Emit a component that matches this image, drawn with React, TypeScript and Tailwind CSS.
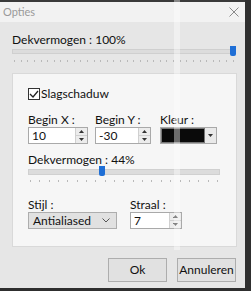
import React from "react";

const font = { fontFamily: 'Lato, "Noto Sans", sans-serif' };

const Ticks = ({ count }: { count: number }) => (
  <div className="flex justify-between px-[2px] h-[3px]">
    {Array.from({ length: count }).map((_, i) => (
      <span key={i} className="w-px h-[2px] bg-[#b9b9b9]" />
    ))}
  </div>
);

const Spinner = () => (
  <div className="flex flex-col w-[12px] h-full border-l border-[#d0d0d0] bg-[#ececec]">
    <div className="flex-1 flex items-center justify-center border-b border-[#d0d0d0]">
      <svg width="5" height="3" viewBox="0 0 5 3"><path d="M0 3 L2.5 0 L5 3 Z" fill="#333" /></svg>
    </div>
    <div className="flex-1 flex items-center justify-center">
      <svg width="5" height="3" viewBox="0 0 5 3"><path d="M0 0 L2.5 3 L5 0 Z" fill="#333" /></svg>
    </div>
  </div>
);

const NumberBox = ({ value, width }: { value: string; width: string }) => (
  <div className={`flex h-[17px] ${width} border border-[#a9a9a9] bg-white`}>
    <div className="flex-1 pl-[3px] text-[12px] leading-[15px] text-[#111]">{value}</div>
    <Spinner />
  </div>
);

const App = () => {
  return (
    <div style={font} className="relative w-[251px] h-[291px] overflow-hidden bg-[#2b2b2b] flex">
      <div className="w-[245px] h-full flex flex-col">
        <div className="h-[2px] bg-[#3a3a3a]" />
        {/* title bar */}
        <div className="h-[20px] bg-[#f2f2f2] flex items-center justify-between pl-[3px] pr-[6px]">
          <span className="text-[11px] text-[#9a9a9a]">Opties</span>
          <svg width="10" height="10" viewBox="0 0 10 10">
            <path d="M0.5 0.5 L9.5 9.5 M9.5 0.5 L0.5 9.5" stroke="#8a8a8a" strokeWidth="1" />
          </svg>
        </div>
        <div className="flex-1 bg-[#e6e6e6] flex flex-col px-[12px] pt-[11px] text-[#111]">
          <div className="text-[12px] leading-[13px] w-[224px]">Dekvermogen : 100%</div>
          {/* slider 1 */}
          <div className="relative h-[11px] w-[224px] flex items-center">
            <div className="w-full h-[5px] bg-[#dcdcdc] border border-[#cfcfcf]" />
            <div className="absolute right-0 top-0 w-[6px] h-[10px] bg-[#1f6fd6] rounded-b-[2px]" />
          </div>
          <div className="mt-[3px] w-[224px]">
            <Ticks count={34} />
          </div>
          {/* panel */}
          <div className="mt-[10px] w-[225px] h-[174px] bg-[#f6f6f6] border border-[#d9d9d9] px-[15px] pt-[13px]">
            <div className="flex items-center gap-[1px] h-[14px]">
              <div className="w-[12px] h-[12px] border border-[#333] bg-white flex items-center justify-center">
                <svg width="10" height="8" viewBox="0 0 10 8">
                  <path d="M1 4 L4 7 L9 1" stroke="#222" strokeWidth="1.3" fill="none" />
                </svg>
              </div>
              <span className="text-[12px]">Slagschaduw</span>
            </div>
            <div className="flex mt-[12px]">
              <div className="w-[67px]">
                <div className="text-[12px] leading-[14px]">Begin X :</div>
                <NumberBox value="10" width="w-[60px]" />
              </div>
              <div className="w-[65px]">
                <div className="text-[12px] leading-[14px]">Begin Y :</div>
                <NumberBox value="-30" width="w-[56px]" />
              </div>
              <div>
                <div className="text-[12px] leading-[14px]">Kleur :</div>
                <div className="flex h-[17px] w-[57px] border border-[#a9a9a9] bg-[#e9e9e9]">
                  <div className="w-[44px] h-full bg-[#0a0a0a] border border-[#777]" />
                  <div className="flex-1 flex items-center justify-center">
                    <svg width="5" height="3" viewBox="0 0 5 3"><path d="M0 0 L2.5 3 L5 0 Z" fill="#333" /></svg>
                  </div>
                </div>
              </div>
            </div>
            <div className="mt-[9px] text-[12px] leading-[13px]">Dekvermogen : 44%</div>
            {/* slider 2 */}
            <div className="relative h-[11px] w-[192px] flex items-center">
              <div className="w-full h-[6px] bg-[#dcdcdc] border border-[#d0d0d0]" />
              <div className="absolute left-[71px] top-0 w-[6px] h-[10px] bg-[#1f6fd6] rounded-b-[2px]" />
            </div>
            <div className="mt-[3px] w-[192px]">
              <Ticks count={21} />
            </div>
            <div className="flex mt-[15px]">
              <div className="w-[102px]">
                <div className="text-[12px] leading-[14px]">Stijl :</div>
                <div className="flex items-center justify-between h-[17px] w-[89px] border border-[#adadad] bg-[#e1e1e1] pl-[4px] pr-[6px]">
                  <span className="text-[12px]">Antialiased</span>
                  <svg width="8" height="5" viewBox="0 0 8 5">
                    <path d="M0.5 0.5 L4 4 L7.5 0.5" stroke="#555" strokeWidth="1" fill="none" />
                  </svg>
                </div>
              </div>
              <div>
                <div className="text-[12px] leading-[14px]">Straal :</div>
                <NumberBox value="7" width="w-[52px]" />
              </div>
            </div>
          </div>
          {/* buttons */}
          <div className="mt-[11px] flex justify-end gap-[10px] w-[224px]">
            <button className="w-[59px] h-[24px] border border-[#adadad] bg-[#e1e1e1] text-[12px]">Ok</button>
            <button className="w-[59px] h-[24px] border border-[#adadad] bg-[#e1e1e1] text-[12px]">Annuleren</button>
          </div>
        </div>
        <div className="h-[3px] bg-[#2e2e2e]" />
      </div>
      <div className="w-[6px] h-full bg-[#2f2f2f]" />
      {/* translucent glare band over the dialog */}
      <div className="absolute left-[174px] top-0 w-[6px] h-[250px] bg-white/40" />
    </div>
  );
};

export default App;
